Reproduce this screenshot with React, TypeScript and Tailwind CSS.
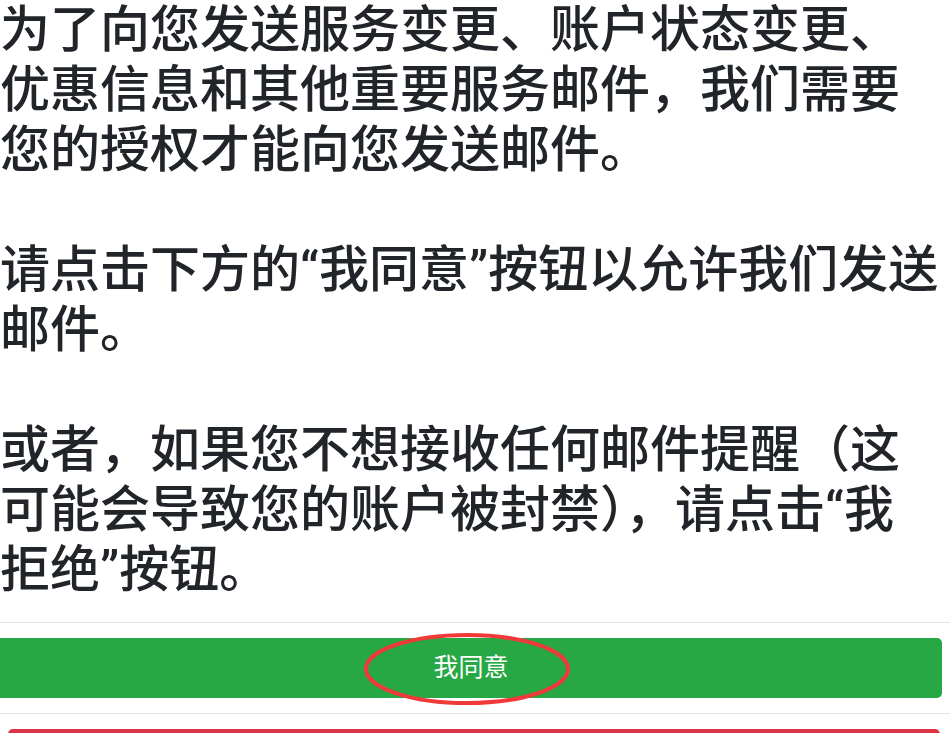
import React from 'react';

const FONT = "font-['Roboto','Noto_Sans_CJK_SC',sans-serif]";

export default function App() {
  return (
    <div className={`w-[950px] h-[733px] overflow-hidden bg-white text-[#212529] ${FONT}`}>
      {/* Message body */}
      <div className="text-[50px] leading-[60px] font-medium whitespace-nowrap">
        <p className="mb-[60px]">
          为了向您发送服务变更、账户状态变更、<br />
          优惠信息和其他重要服务邮件，我们需要<br />
          您的授权才能向您发送邮件。
        </p>
        <p className="mb-[60px]">
          请点击下方的“我同意”按钮以允许我们发送<br />
          邮件。
        </p>
        <p className="mb-[22px]">
          或者，如果您不想接收任何邮件提醒（这<br />
          可能会导致您的账户被封禁），请点击“我<br />
          拒绝”按钮。
        </p>
      </div>

      {/* Action list */}
      <div className="border-t border-[#dee2e6] py-[15px]">
        <div className="relative w-[942px]">
          <button className="w-full h-[60px] bg-[#28a745] rounded-r-[5px] text-white text-[25px] font-normal flex items-center justify-center">
            我同意
          </button>
          <svg
            className="absolute left-[363px] top-[-6px] pointer-events-none"
            width="208"
            height="76"
            viewBox="0 0 208 76"
          >
            <ellipse cx="104" cy="37" rx="101" ry="34" fill="none" stroke="#f03a3a" strokeWidth="4" />
          </svg>
        </div>
      </div>
      <div className="border-t border-[#dee2e6] pt-[15px]">
        <button className="block ml-[8px] w-[932px] h-[60px] bg-[#dc3545] rounded-[5px] text-white text-[25px] leading-[60px]">
          我拒绝
        </button>
      </div>
    </div>
  );
}
